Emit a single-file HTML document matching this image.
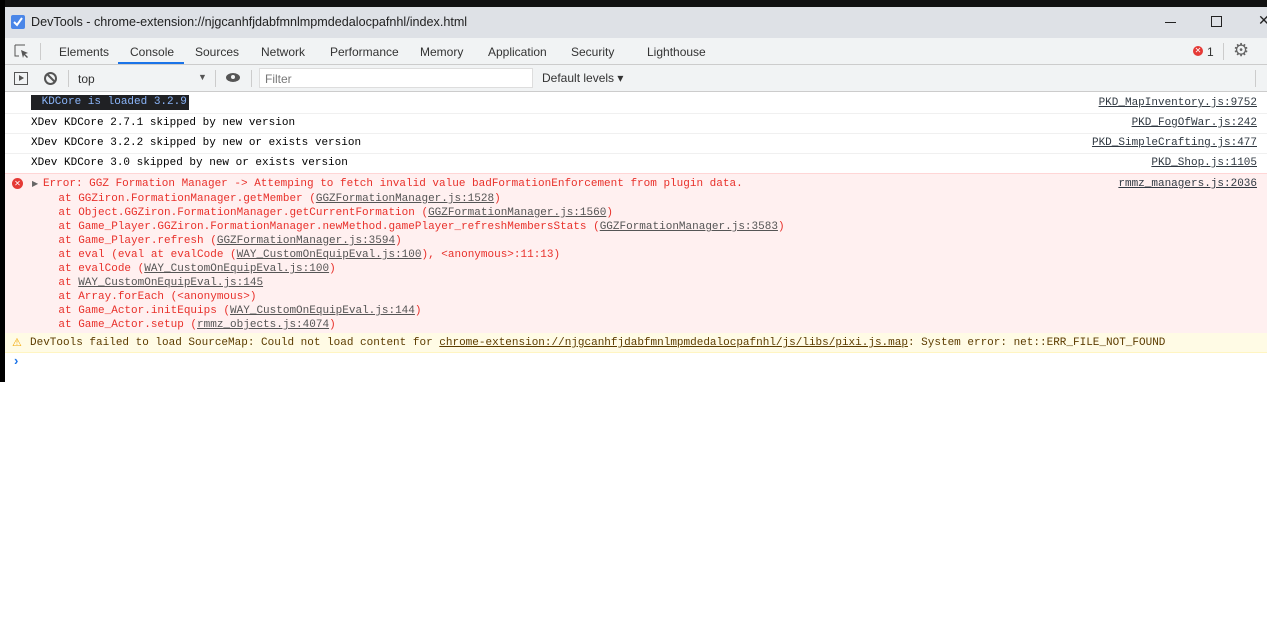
<html><head><style>
body{margin:0;width:1267px;height:641px;background:#fff;position:relative;overflow:hidden;font-family:"Liberation Sans",sans-serif}
.a{position:absolute}
.m{font-family:"Liberation Mono",monospace;font-size:11px;white-space:pre}
.row{position:absolute;left:5px;right:0;height:20px;border-bottom:1px solid #f0f0f0}
.row .t{position:absolute;left:26px;top:4px}
.row .s{position:absolute;right:10px;top:4px;color:#303942;text-decoration:underline}
.tab{position:absolute;top:45px;font-size:12px;color:#333}
u{color:#555}
</style></head><body>
<div class="a" style="left:0;top:0;width:1267px;height:7px;background:#111"></div>
<div class="a" style="left:0;top:0;width:5px;height:382px;background:#000"></div>
<div class="a" style="left:5px;top:7px;right:0;height:31px;background:#dee1e6"></div>
<svg class="a" style="left:11px;top:15px" width="14" height="14"><rect width="14" height="14" rx="2" fill="#4a86e8"/><path d="M3 7l3 3 5-7" stroke="#fff" stroke-width="2" fill="none"/></svg>
<div class="a" style="left:31px;top:15px;font-size:12.6px;color:#222">DevTools - chrome-extension://njgcanhfjdabfmnlmpmdedalocpafnhl/index.html</div>
<div class="a" style="left:1165px;top:22px;width:11px;height:1px;background:#222"></div>
<div class="a" style="left:1211px;top:16px;width:9px;height:9px;border:1px solid #222"></div>
<div class="a" style="left:1258px;top:12px;font-size:14px;color:#222">✕</div>
<div class="a" style="left:5px;top:38px;right:0;height:26px;background:#f1f3f4;border-bottom:1px solid #ccc"></div>
<svg class="a" style="left:14px;top:44px" width="16" height="16"><path d="M1 1h10M1 1v11h4" stroke="#555" fill="none"/><path d="M7 6l7 3-3 1 3 3-1 1-3-3-1 3z" fill="#555"/></svg>
<div class="a" style="left:40px;top:43px;width:1px;height:17px;background:#ccc"></div>
<div class="tab" style="left:59px">Elements</div>
<div class="tab" style="left:130px">Console</div>
<div class="a" style="left:118px;top:62px;width:66px;height:2px;background:#1a73e8"></div>
<div class="tab" style="left:195px">Sources</div>
<div class="tab" style="left:261px">Network</div>
<div class="tab" style="left:330px">Performance</div>
<div class="tab" style="left:420px">Memory</div>
<div class="tab" style="left:488px">Application</div>
<div class="tab" style="left:571px">Security</div>
<div class="tab" style="left:647px">Lighthouse</div>
<div class="a" style="left:1193px;top:46px;width:10px;height:10px;border-radius:50%;background:#e53935;color:#fff;font-size:8px;line-height:10px;text-align:center">✕</div>
<div class="a" style="left:1207px;top:45px;font-size:12px;color:#333">1</div>
<div class="a" style="left:1223px;top:43px;width:1px;height:17px;background:#ccc"></div>
<div class="a" style="left:1233px;top:40px;font-size:18px;color:#666">⚙</div>
<div class="a" style="left:5px;top:65px;right:0;height:26px;background:#f1f3f4;border-bottom:1px solid #ccc"></div>
<div class="a" style="left:14px;top:72px;width:12px;height:11px;border:1px solid #555"></div>
<div class="a" style="left:19px;top:75px;border-left:5px solid #555;border-top:3px solid transparent;border-bottom:3px solid transparent;width:0;height:0"></div>
<div class="a" style="left:44px;top:72px;width:9px;height:9px;border:2px solid #555;border-radius:50%"></div>
<div class="a" style="left:45px;top:77px;width:12px;height:2px;background:#555;transform:rotate(45deg)"></div>
<div class="a" style="left:68px;top:70px;width:1px;height:17px;background:#ccc"></div>
<div class="a" style="left:78px;top:72px;font-size:12px;color:#333">top</div>
<div class="a" style="left:198px;top:72px;font-size:9px;color:#555">▼</div>
<div class="a" style="left:215px;top:70px;width:1px;height:17px;background:#ccc"></div>
<div class="a" style="left:226px;top:73px;width:14px;height:9px;border-radius:50%;background:#555"></div>
<div class="a" style="left:231px;top:75px;width:4px;height:4px;border-radius:50%;background:#f1f3f4"></div>
<div class="a" style="left:251px;top:70px;width:1px;height:17px;background:#ccc"></div>
<div class="a" style="left:259px;top:68px;width:274px;height:20px;background:#fff;border:1px solid #ddd;box-sizing:border-box"></div>
<div class="a" style="left:265px;top:72px;font-size:12px;color:#777">Filter</div>
<div class="a" style="left:542px;top:71px;font-size:12px;color:#333">Default levels ▾</div>
<div class="a" style="left:1255px;top:70px;width:1px;height:17px;background:#ccc"></div>
<div class="row m" style="top:93px"><span class="t" style="left:26px;background:#202124;color:#8ab4f8;padding:0 2px 0 4px;top:2px;line-height:15px"> KDCore is loaded 3.2.9</span><span class="s">PKD_MapInventory.js:9752</span></div>
<div class="row m" style="top:113px"><span class="t">XDev KDCore 2.7.1 skipped by new version</span><span class="s">PKD_FogOfWar.js:242</span></div>
<div class="row m" style="top:133px"><span class="t">XDev KDCore 3.2.2 skipped by new or exists version</span><span class="s">PKD_SimpleCrafting.js:477</span></div>
<div class="row m" style="top:153px"><span class="t">XDev KDCore 3.0 skipped by new or exists version</span><span class="s">PKD_Shop.js:1105</span></div>
<div class="a m" style="left:5px;top:173px;right:0;height:159px;background:#fff0f0;border-top:1px solid #ffd6d6;border-bottom:1px solid #ffd6d6;color:#e8302a;line-height:14px">
<div class="a" style="left:7px;top:4px;width:11px;height:11px;border-radius:50%;background:#e53935;color:#fff;font-size:8px;line-height:11px;text-align:center;font-family:'Liberation Sans'">✕</div>
<div class="a" style="left:27px;top:3px"><span style="color:#666;font-size:8px">▶ </span>Error: GGZ Formation Manager -&gt; Attemping to fetch invalid value badFormationEnforcement from plugin data.
    at GGZiron.FormationManager.getMember (<u>GGZFormationManager.js:1528</u>)
    at Object.GGZiron.FormationManager.getCurrentFormation (<u>GGZFormationManager.js:1560</u>)
    at Game_Player.GGZiron.FormationManager.newMethod.gamePlayer_refreshMembersStats (<u>GGZFormationManager.js:3583</u>)
    at Game_Player.refresh (<u>GGZFormationManager.js:3594</u>)
    at eval (eval at evalCode (<u>WAY_CustomOnEquipEval.js:100</u>), &lt;anonymous&gt;:11:13)
    at evalCode (<u>WAY_CustomOnEquipEval.js:100</u>)
    at <u>WAY_CustomOnEquipEval.js:145</u>
    at Array.forEach (&lt;anonymous&gt;)
    at Game_Actor.initEquips (<u>WAY_CustomOnEquipEval.js:144</u>)
    at Game_Actor.setup (<u>rmmz_objects.js:4074</u>)</div>
<span class="a" style="right:10px;top:3px;color:#303942;text-decoration:underline">rmmz_managers.js:2036</span>
</div>
<div class="a m" style="left:5px;top:333px;right:0;height:19px;background:#fffbe5;border-bottom:1px solid #fff5c2;color:#5c3c00">
<div class="a" style="left:7px;top:3px;color:#f2a600;font-size:11px;font-family:'DejaVu Sans'">⚠</div>
<span class="a" style="left:25px;top:4px">DevTools failed to load SourceMap: Could not load content for <u style="color:#5c3c00">chrome-extension://njgcanhfjdabfmnlmpmdedalocpafnhl/js/libs/pixi.js.map</u>: System error: net::ERR_FILE_NOT_FOUND</span></div>
<div class="a" style="left:14px;top:353px;color:#1a73e8;font-size:13px;font-weight:bold">›</div>
</body></html>
